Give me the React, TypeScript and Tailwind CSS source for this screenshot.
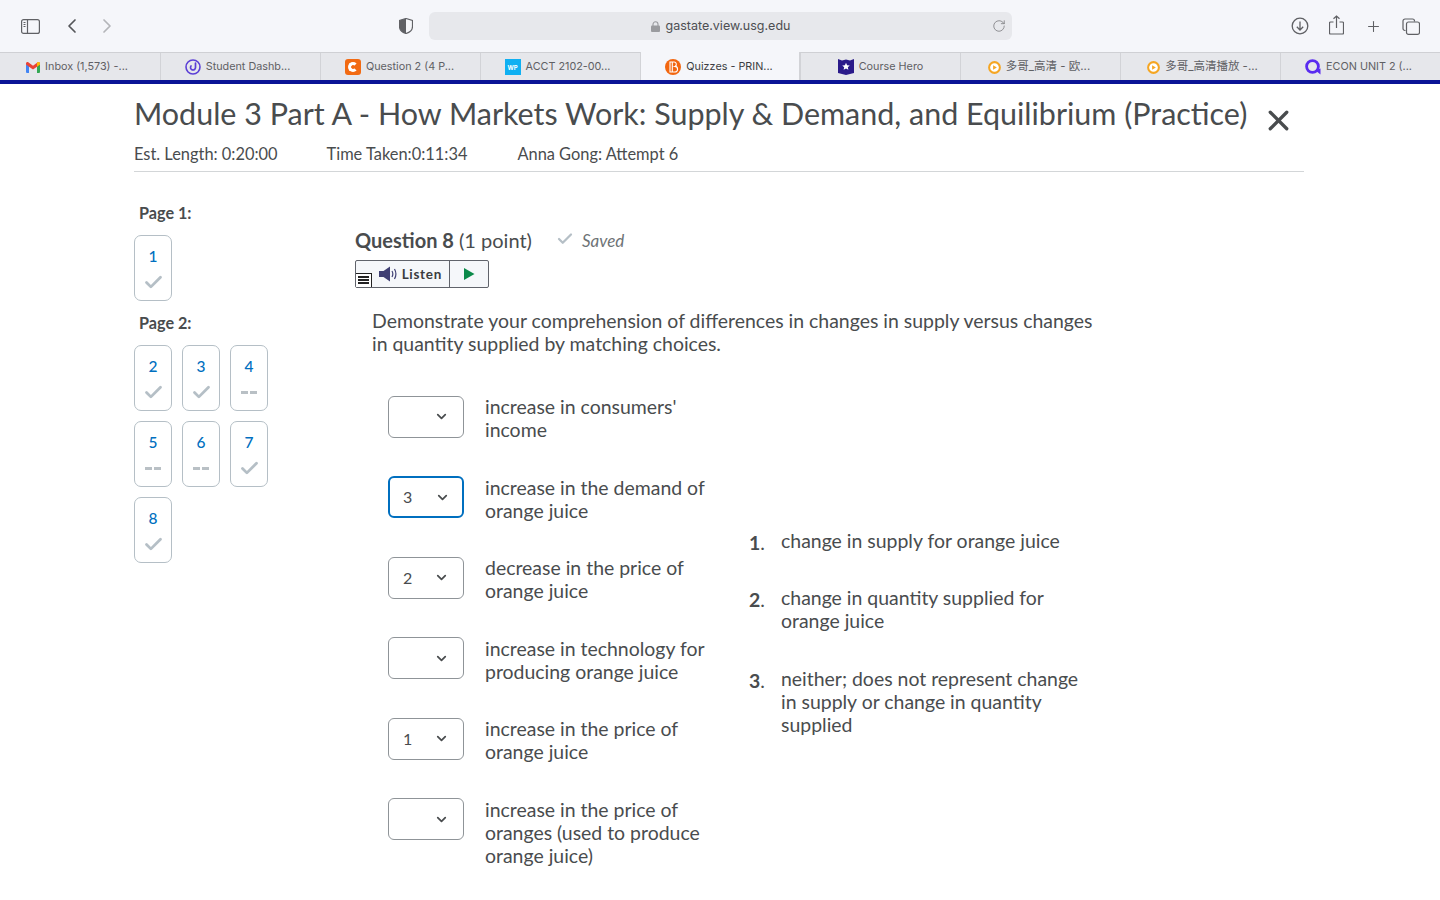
import React from "react";
import { Check, ChevronDown, ChevronLeft, ChevronRight, Plus, RotateCw, X } from "lucide-react";

const ui = "font-['Inter','Noto_Sans_CJK_SC',sans-serif]";

const GmailIcon = () => (
  <svg width="14" height="11" viewBox="0 0 14 11">
    <path d="M0 2v8a1 1 0 0 0 1 1h2V4z" fill="#4285f4" />
    <path d="M14 2v8a1 1 0 0 1-1 1h-2V4z" fill="#34a853" />
    <path d="M0 2.500 3 4.700 7 7.500l4-2.800 3-2.200V1.500C14 .3 12.700-.4 11.700.3L7 3.800 2.300.3C1.300-.4 0 .3 0 1.500z" fill="#ea4335" />
    <path d="M11 4.700 14 2.500V1.500C14 .3 12.700-.4 11.700.3L11 .8z" fill="#fbbc04" />
  </svg>
);

const DashIcon = () => (
  <svg width="16" height="16" viewBox="0 0 16 16" fill="none">
    <circle cx="8" cy="8" r="7" stroke="#5b3fd6" strokeWidth="1.600" />
    <path d="M10.500 4v4.500a2.500 2.500 0 1 1-4.500-1.500" stroke="#5b3fd6" strokeWidth="1.700" strokeLinecap="round" />
  </svg>
);

const CheggIcon = () => (
  <span className="flex h-4 w-4 items-center justify-center rounded-[3px] bg-[#f26a12]">
    <span className="h-[10px] w-[10px] rounded-full border-[3px] border-white border-r-transparent" />
  </span>
);

const WpIcon = () => (
  <span className="flex h-4 w-4 items-center justify-center bg-[#0fb0f2] text-[6px] font-bold text-white">WP</span>
);

const BrightspaceIcon = () => (
  <svg width="16" height="16" viewBox="0 0 16 16" fill="none">
    <circle cx="8" cy="8" r="8" fill="#f2660f" />
    <path d="M5 3h4a2.300 2.300 0 0 1 1 4.400A2.600 2.600 0 0 1 9.500 13H5zM7.300 3v10" stroke="#fff" strokeWidth="1.100" />
  </svg>
);

const HeroIcon = () => (
  <svg width="16" height="16" viewBox="0 0 16 16">
    <path d="M0 0l4 1.500L8 .5l4 1 4-1.500v14l-8 2-8-2z" fill="#2a1a8a" />
    <path d="M8 3.800l1.100 2.500 2.700.2-2 1.700.6 2.600L8 9.400l-2.400 1.400.6-2.600-2-1.700 2.700-.2z" fill="#fff" />
  </svg>
);

const PlayIcon = () => (
  <svg width="13" height="13" viewBox="0 0 14 14">
    <circle cx="7" cy="7" r="5.800" fill="#fff" stroke="#f5a623" strokeWidth="2.200" />
    <path d="M5.500 4.500l4 2.500-4 2.500z" fill="#f5a623" />
  </svg>
);

const QIcon = () => (
  <svg width="16" height="16" viewBox="0 0 16 16" fill="none">
    <circle cx="7.500" cy="7.500" r="5.900" stroke="#5a2cf0" strokeWidth="2.800" />
    <path d="M10.500 11.500l5 4v-6z" fill="#5a2cf0" />
  </svg>
);

const tabs: { icon: React.ReactNode; label: string; shift: string; active?: boolean }[] = [
  { icon: <GmailIcon />, label: "Inbox (1,573) -...", shift: "pr-[6px] text-[10.8px]" },
  { icon: <DashIcon />, label: "Student Dashb...", shift: "pr-[6px] text-[10.8px]" },
  { icon: <CheggIcon />, label: "Question 2 (4 P...", shift: "pr-[2px] text-[10.8px]" },
  { icon: <WpIcon />, label: "ACCT 2102-00...", shift: "pr-[6px] text-[10.8px]" },
  { icon: <BrightspaceIcon />, label: "Quizzes - PRIN...", shift: "pr-[2px] text-[10.8px]", active: true },
  { icon: <HeroIcon />, label: "Course Hero", shift: "text-[10.8px]" },
  { icon: <PlayIcon />, label: "多哥_高清 - 欧...", shift: "pr-[3px] text-[11.5px]" },
  { icon: <PlayIcon />, label: "多哥_高清播放 -...", shift: "pl-[4px] text-[11.5px]" },
  { icon: <QIcon />, label: "ECON UNIT 2 (...", shift: "pr-[4px] text-[10.8px]" },
];

const Toolbar = () => (
  <div className={`flex h-[52px] items-center bg-[#f5f6fa] text-[#5f6064] ${ui}`}>
    <svg className="ml-[21px]" width="19" height="15" viewBox="0 0 19 15" fill="none" stroke="#606165" strokeWidth="1.200">
      <rect x=".6" y=".6" width="17.800" height="13.800" rx="2" />
      <path d="M6.500.6v13.800" />
      <path d="M2.500 3.500h2M2.500 5.500h2M2.500 7.500h2" strokeWidth="1" />
    </svg>
    <ChevronLeft className="ml-[20px] text-[#55565a]" size={24} strokeWidth={1.700} />
    <ChevronRight className="ml-[11px] text-[#b4b5b9]" size={24} strokeWidth={1.700} />
    <svg className="ml-[280px]" width="14" height="16" viewBox="0 0 14 16">
      <path d="M7 .5l6.500 2v6c0 3.500-3 6-6.500 7-3.500-1-6.500-3.500-6.500-7v-6z" fill="#f5f6fa" stroke="#606165" strokeWidth="1.200" />
      <path d="M7 .5v15c-3.500-1-6.500-3.500-6.500-7v-6z" fill="#606165" />
    </svg>
    <div className="relative ml-[16px] flex h-[28px] w-[583px] items-center justify-center rounded-[6px] bg-[#e7e8ec] text-[12.5px] text-[#4d4e52]">
      <svg className="mr-[6px]" width="9" height="11" viewBox="0 0 9 11">
        <path d="M2 5V3.300a2.500 2.500 0 0 1 5 0V5" fill="none" stroke="#9a9b9f" strokeWidth="1.100" />
        <rect y="4.500" width="9" height="6.500" rx="1" fill="#9a9b9f" />
      </svg>
      gastate.view.usg.edu
      <RotateCw className="absolute top-[7px] right-[6px] text-[#75767a]" size={14} strokeWidth={1.300} />
    </div>
    <svg className="ml-[279px]" width="18" height="18" viewBox="0 0 18 18" fill="none" stroke="#5f6064" strokeWidth="1.300">
      <circle cx="9" cy="9" r="7.800" />
      <path d="M9 4.500v8.500M5.800 9.800 9 13l3.200-3.200" />
    </svg>
    <svg className="ml-[20px] -translate-y-[1px]" width="15" height="20" viewBox="0 0 15 20" fill="none" stroke="#5f6064" strokeWidth="1.200">
      <path d="M4.500 7H1.500a1 1 0 0 0-1 1v10a1 1 0 0 0 1 1h12a1 1 0 0 0 1-1V8a1 1 0 0 0-1-1h-3" />
      <path d="M7.500 13V1M4.500 3.800 7.500 1l3 2.800" />
    </svg>
    <Plus className="ml-[21px]" size={17} strokeWidth={1.500} />
    <svg className="ml-[20px]" width="18" height="17" viewBox="0 0 18 17" fill="none" stroke="#5f6064" strokeWidth="1.200">
      <path d="M3.500 12.500h-.500a2 2 0 0 1-2-2V3a2 2 0 0 1 2-2h7.500a2 2 0 0 1 2 2v.500" />
      <rect x="4.500" y="4" width="13" height="12.400" rx="2" />
    </svg>
  </div>
);

const TabBar = () => (
  <div className={`flex h-[32px] border-t border-b-[4px] border-t-[#cfd0d4] border-b-[#0a1496] bg-[#e6e7eb] ${ui}`}>
    {tabs.map((t) => (
      <div
        key={t.label}
        className={`flex w-[160px] items-center justify-center gap-[5px] border-l border-[#d2d3d7] first:border-l-0 ${t.shift} ${
          t.active ? "-mt-px h-[28px] border-r border-[#cfd0d4] bg-[#f5f6fa] pt-[2px] text-[#3c3d41]" : "h-full pt-px text-[#5f6064]"
        }`}
      >
        {t.icon}
        <span className="whitespace-nowrap">{t.label}</span>
      </div>
    ))}
  </div>
);

const QuestionBox = ({ n, done }: { n: number; done: boolean }) => (
  <div className="flex h-[66px] w-[38px] flex-col items-center rounded-[7px] border border-[#b5bfc6] pt-[10px]">
    <span className="text-[15.5px] leading-[20px] font-medium text-[#006fbf]">{n}</span>
    <span className="mt-[6px] flex h-[20px] items-center">
      {done ? (
        <Check size={21} strokeWidth={3.200} className="text-[#b5bfc6]" />
      ) : (
        <span className="flex gap-[2px]">
          <span className="h-[3px] w-[7px] bg-[#b9c0c5]" />
          <span className="h-[3px] w-[7px] bg-[#b9c0c5]" />
        </span>
      )}
    </span>
  </div>
);

const Sidebar = () => (
  <div className="w-[221px] shrink-0 pt-[30px]">
    <h3 className="pl-[5px] text-[16.2px] leading-[22px] font-bold text-[#494c4e]">Page 1:</h3>
    <div className="mt-[11px]">
      <QuestionBox n={1} done />
    </div>
    <h3 className="mt-[11px] pl-[5px] text-[16.2px] leading-[22px] font-bold text-[#494c4e]">Page 2:</h3>
    <div className="mt-[11px] grid w-[134px] grid-cols-3 gap-x-[10px] gap-y-[10px]">
      <QuestionBox n={2} done />
      <QuestionBox n={3} done />
      <QuestionBox n={4} done={false} />
      <QuestionBox n={5} done={false} />
      <QuestionBox n={6} done={false} />
      <QuestionBox n={7} done />
      <QuestionBox n={8} done />
    </div>
  </div>
);

const ListenButton = () => (
  <div className="mt-[5px] flex h-[28px] w-[134px] rounded-[2px] border border-[#60636b] bg-[#f5f7fa]">
    <div className="relative flex w-[94px] items-center justify-end gap-[4px] border-r border-[#60636b] pt-px pr-[7px]">
      <span className="absolute bottom-0 left-0 flex h-[14px] w-[16px] flex-col items-center justify-center gap-[1px] border-t border-r border-[#222] bg-white">
        <span className="h-[2px] w-[11px] bg-[#222]" />
        <span className="h-[2px] w-[11px] bg-[#222]" />
        <span className="h-[2px] w-[11px] bg-[#222]" />
      </span>
      <svg width="19" height="16" viewBox="0 0 19 16" fill="none">
        <path d="M0 5h4.500L11 .5v15L4.500 11H0z" fill="#3f3f74" />
        <path d="M13 5c1 1.800 1 4.200 0 6M15.500 3c1.700 3 1.700 7 0 10" stroke="#3f3f74" strokeWidth="1.200" />
      </svg>
      <span className="text-[13.5px] font-bold tracking-[0.7px] text-[#3a3c3e]">Listen</span>
    </div>
    <div className="flex flex-1 items-center justify-center">
      <svg width="12" height="12" viewBox="0 0 12 12">
        <path d="M1 0l10.500 6L1 12z" fill="#0b8a4a" />
      </svg>
    </div>
  </div>
);

const Select = ({ value, focused }: { value?: string; focused?: boolean }) => (
  <div
    className={`flex h-[42px] w-[76px] shrink-0 items-center justify-between rounded-[6px] bg-white text-[16px] text-[#494c4e] ${
      focused ? "border-2 border-[#006fbf] pr-[12px] pl-[13px]" : "border border-[#8f9498] pr-[14px] pl-[14px]"
    }`}
  >
    <span>{value}</span>
    <ChevronDown size={15} strokeWidth={2.800} className="text-[#494c4e]" />
  </div>
);

const rows: { value?: string; focused?: boolean; text: string[] }[] = [
  { text: ["increase in consumers'", "income"] },
  { value: "3", focused: true, text: ["increase in the demand of", "orange juice"] },
  { value: "2", text: ["decrease in the price of", "orange juice"] },
  { text: ["increase in technology for", "producing orange juice"] },
  { value: "1", text: ["increase in the price of", "orange juice"] },
  { text: ["increase in the price of", "oranges (used to produce", "orange juice)"] },
];

const choices = [
  ["change in supply for orange juice"],
  ["change in quantity supplied for", "orange juice"],
  ["neither; does not represent change", "in supply or change in quantity", "supplied"],
];

const Question = () => (
  <div className="flex-1 pt-[54px]">
    <div className="flex items-baseline">
      <h2 className="text-[20px] leading-[28px] text-[#494c4e]">
        <span className="font-bold">Question 8</span> (1 point)
      </h2>
      <Check size={18} strokeWidth={3} className="ml-[24px] -translate-y-[1px] self-center text-[#b5bfc6]" />
      <span className="ml-[8px] -translate-y-[1px] text-[17px] text-[#6e7376] italic">Saved</span>
    </div>
    <ListenButton />
    <p className="mt-[21px] pl-[17px] text-[19.45px] leading-[23px] whitespace-nowrap text-[#494c4e]">
      Demonstrate your comprehension of differences in changes in supply versus changes
      <br />
      in quantity supplied by matching choices.
    </p>
    <div className="mt-[41px] flex items-center pl-[33px]">
      <div className="flex w-[361px] shrink-0 flex-col gap-[35px]">
        {rows.map((r) => (
          <div key={r.text.join()} className="flex gap-[21px]">
            <Select value={r.value} focused={r.focused} />
            <div className="-mt-[0.5px] text-[19.45px] leading-[23px] whitespace-nowrap text-[#494c4e]">
              {r.text.map((l) => (
                <div key={l}>{l}</div>
              ))}
            </div>
          </div>
        ))}
      </div>
      <ol className="flex flex-col gap-[34px]">
        {choices.map((c, i) => (
          <li key={c[0]} className="flex text-[19.45px] leading-[23px] whitespace-nowrap text-[#494c4e] first:translate-y-[2px] last:mt-px">
            <span className="w-[32px] pt-[2px]">
              <span className="font-bold">{i + 1}</span>.
            </span>
            <div>
              {c.map((l) => (
                <div key={l}>{l}</div>
              ))}
            </div>
          </li>
        ))}
      </ol>
    </div>
  </div>
);

export default function App() {
  return (
    <div className="h-screen overflow-hidden bg-white font-['Lato',sans-serif]">
      <Toolbar />
      <TabBar />
      <div className="ml-[134px] w-[1170px]">
        <div className="border-b border-[#d3d6d8] pb-[6px]">
          <div className="flex items-start pt-[8px]">
            <h1 className="text-[30.47px] leading-[42px] whitespace-nowrap text-[#494c4e]">
              Module 3 Part A - How Markets Work: Supply &amp; Demand, and Equilibrium (Practice)
            </h1>
            <X size={33} strokeWidth={2.400} className="mt-[12px] ml-[15px] text-[#494c4e]" />
          </div>
          <div className="mt-[6px] flex text-[16.4px] leading-[22px] text-[#494c4e]">
            <span>Est. Length: 0:20:00</span>
            <span className="ml-[49px]">Time Taken:0:11:34</span>
            <span className="ml-[50px]">Anna Gong: Attempt 6</span>
          </div>
        </div>
        <div className="flex">
          <Sidebar />
          <Question />
        </div>
      </div>
    </div>
  );
}
